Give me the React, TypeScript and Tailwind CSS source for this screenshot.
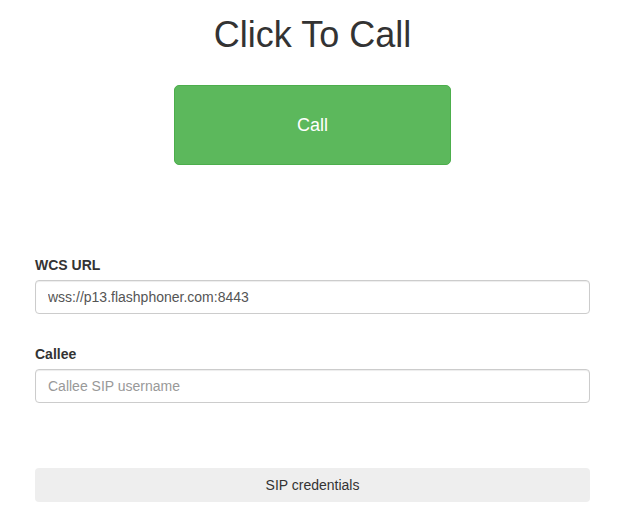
export default function App() {
  const font = { fontFamily: '"Liberation Sans", Arial, sans-serif' };
  return (
    <div className="min-h-[525px] bg-white pl-[35px] pr-[31px] text-[14px] text-[#333]" style={font}>
      <h1 className="pt-[15px] text-center text-[36px] leading-[40px] font-normal text-[#333]">
        Click To Call
      </h1>
      <div className="mt-[30px] flex justify-center">
        <button
          type="button"
          className="h-[80px] w-[277px] rounded-[5px] border border-[#4cae4c] bg-[#5cb85c] text-[18px] text-white"
        >
          Call
        </button>
      </div>

      <div className="mt-[90px]">
        <label className="mb-[5px] block h-[20px] font-bold leading-[20px]" htmlFor="url">
          WCS URL
        </label>
        <input
          id="url"
          type="text"
          defaultValue="wss://p13.flashphoner.com:8443"
          className="block h-[34px] w-full rounded-[4px] border border-[#ccc] px-[12px] text-[14px] text-[#555] shadow-[inset_0_1px_1px_rgba(0,0,0,0.075)] outline-none"
        />
      </div>

      <div className="mt-[30px]">
        <label className="mb-[5px] block h-[20px] font-bold leading-[20px]" htmlFor="callee">
          Callee
        </label>
        <input
          id="callee"
          type="text"
          placeholder="Callee SIP username"
          className="block h-[34px] w-full rounded-[4px] border border-[#ccc] px-[12px] text-[14px] text-[#555] placeholder-[#999] shadow-[inset_0_1px_1px_rgba(0,0,0,0.075)] outline-none"
        />
      </div>

      <button
        type="button"
        className="mt-[65px] block h-[34px] w-full rounded-[4px] bg-[#eee] text-[14px] text-[#333]"
      >
        SIP credentials
      </button>
    </div>
  );
}
